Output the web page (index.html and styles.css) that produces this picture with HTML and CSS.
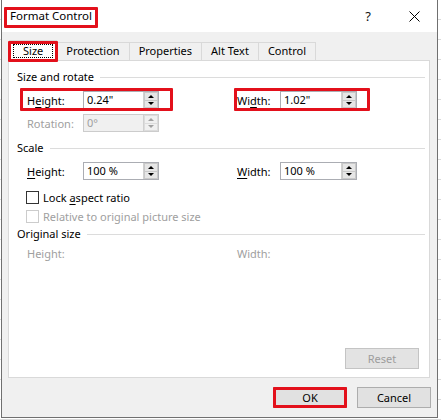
FILE: index.html
```html
<!DOCTYPE html>
<html>
<head>
<meta charset="utf-8">
<title>Format Control</title>
<link rel="stylesheet" href="styles.css">
</head>
<body>
<div class="dialog">
  <div class="titlebar">
    <div class="title"><span>Format Control</span><i class="hl"></i></div>
    <div class="cap-btn help">?</div>
    <div class="cap-btn close">
      <svg width="11" height="11" viewBox="0 0 11 11"><path d="M0.5 0.5 L10.5 10.5 M10.5 0.5 L0.5 10.5" stroke="#000" stroke-width="1" fill="none"/></svg>
    </div>
  </div>
  <div class="body">
    <div class="tabs">
      <div class="tab active"><span class="focus">Size</span><i class="hl"></i></div>
      <div class="tab">Protection</div>
      <div class="tab">Properties</div>
      <div class="tab">Alt Text</div>
      <div class="tab">Control</div>
    </div>
    <div class="panel">
      <div class="group-title"><span>Size and rotate</span></div>
      <div class="row first">
        <div class="field">
          <span class="lbl">H<u>e</u>ight:</span>
          <div class="input"><span>0.24"</span><div class="spin"><b class="up"></b><b class="down"></b></div></div>
          <i class="hl hl-h"></i>
        </div>
        <div class="field second">
          <span class="lbl">Wi<u>d</u>th:</span>
          <div class="input"><span>1.02"</span><div class="spin"><b class="up"></b><b class="down"></b></div></div>
          <i class="hl hl-w"></i>
        </div>
      </div>
      <div class="row tight">
        <div class="field disabled">
          <span class="lbl">Rotation:</span>
          <div class="input"><span>0°</span><div class="spin"><b class="up"></b><b class="down"></b></div></div>
        </div>
      </div>

      <div class="group-title spaced"><span>Scale</span></div>
      <div class="row first">
        <div class="field">
          <span class="lbl"><u>H</u>eight:</span>
          <div class="input"><span>100 %</span><div class="spin"><b class="up"></b><b class="down"></b></div></div>
        </div>
        <div class="field second">
          <span class="lbl"><u>W</u>idth:</span>
          <div class="input"><span>100 %</span><div class="spin"><b class="up"></b><b class="down"></b></div></div>
        </div>
      </div>
      <div class="check first-check"><span class="box"></span><span>Lock <u>a</u>spect ratio</span></div>
      <div class="check disabled"><span class="box"></span><span>Relative to original picture size</span></div>

      <div class="group-title"><span>Original size</span></div>
      <div class="row orig disabled">
        <span class="lbl wide">Height:</span>
        <span class="lbl second">Width:</span>
      </div>

      <div class="reset-row"><div class="btn dis">Reset</div></div>
    </div>
    <div class="footer">
      <div class="btn ok">OK<i class="hl"></i></div>
      <div class="btn">Cancel</div>
    </div>
  </div>
</div>
</body>
</html>
```

FILE: styles.css
```css
html, body {
  margin: 0;
  padding: 0;
}
body {
  background: #fff repeating-linear-gradient(to bottom, transparent 0 19px, #dadada 19px 20px);
  font-family: "Noto Sans", "Open Sans", sans-serif;
  font-size: 11px;
  color: #000;
  width: 441px;
  height: 420px;
  overflow: hidden;
}
u { text-decoration: underline; text-underline-offset: 2px; }

.dialog {
  margin-left: 1px;
  width: 437px;
  height: 418px;
  box-sizing: border-box;
  border: 1px solid #707070;
  border-top: none;
  background: #f0f0f0;
  display: flex;
  flex-direction: column;
}

.hl {
  position: absolute;
  border: 3px solid #e3101b;
  border-radius: 1px;
  pointer-events: none;
  z-index: 5;
}

/* title bar */
.titlebar {
  height: 32px;
  background: #fff;
  display: flex;
  align-items: center;
  flex: none;
}
.title {
  position: relative;
  margin-left: 8px;
  line-height: 16px;
  font-size: 11.5px;
}
.title .hl { left: -6px; right: -6px; top: -1px; bottom: -4px; }
.cap-btn {
  width: 46px;
  height: 32px;
  display: flex;
  align-items: center;
  justify-content: center;
}
.help { margin-left: auto; font-size: 13px; color: #111; padding-left: 3px; }
.close svg { display: block; }

/* body */
.body {
  flex: 1;
  display: flex;
  flex-direction: column;
  padding: 8px 7px 0 6px;
}
.tabs {
  display: flex;
  align-items: flex-end;
  height: 20px;
  padding-left: 1px;
  position: relative;
  z-index: 2;
}
.tab {
  height: 18px;
  box-sizing: border-box;
  border: 1px solid #d9d9d9;
  border-bottom: none;
  background: #f0f0f0;
  padding: 0 9px;
  line-height: 16px;
  margin-right: -1px;
}
.tab.active {
  position: relative;
  height: 21px;
  margin-bottom: -1px;
  background: #fff;
  padding: 0 13px;
  line-height: 19px;
}
.tab .focus { display: inline-block; }
.tab.active::before {
  content: "";
  position: absolute;
  left: 3px;
  right: 3px;
  top: 3px;
  bottom: 3px;
  border: 1px dotted #000;
}
.tab.active .hl { left: -2px; right: -2px; top: 0; bottom: -1px; }

.panel {
  height: 318px;
  box-sizing: border-box;
  border: 1px solid #d9d9d9;
  background: #fff;
  display: flex;
  flex-direction: column;
  padding: 8px 4px 8px 8px;
  flex: none;
}
.group-title {
  display: flex;
  align-items: center;
  gap: 6px;
  height: 16px;
  line-height: 16px;
}
.group-title::after {
  content: "";
  flex: 1;
  height: 1px;
  background: #dcdcdc;
}
.group-title.spaced { margin-top: 8px; }

.row {
  display: flex;
  align-items: center;
  height: 18px;
  padding-left: 10px;
  margin-top: 6px;
}
.row.tight { margin-top: 5px; }
.row.orig { margin-top: 2px; }
.field {
  display: flex;
  align-items: center;
  position: relative;
  height: 18px;
}
.field.second { margin-left: 78px; }
.lbl { width: 56px; white-space: nowrap; }
.second .lbl { width: 43px; }
.lbl.wide { width: 132px; }
.row .lbl.second { margin-left: 78px; width: auto; }
.input {
  position: relative;
  width: 76px;
  height: 18px;
  box-sizing: border-box;
  border: 1px solid #abadb3;
  padding-left: 3px;
  line-height: 16px;
  background: #fff;
}
.second .input { width: 77px; }
.spin {
  position: absolute;
  right: 0;
  top: 0;
  bottom: 0;
  width: 14px;
  display: flex;
  flex-direction: column;
  border-left: 1px solid #d0d0d0;
}
.spin b {
  flex: 1;
  background: #e6e6e6;
  border: 1px solid #c9c9c9;
  display: flex;
  align-items: center;
  justify-content: center;
}
.spin b + b { border-top: none; }
.spin b::after {
  content: "";
  width: 0;
  height: 0;
  border-left: 3px solid transparent;
  border-right: 3px solid transparent;
}
.spin .up::after { border-bottom: 3px solid #000; }
.spin .down::after { border-top: 3px solid #000; }

.hl-h { left: -7px; right: -14px; top: -3px; bottom: -2px; }
.hl-w { left: -3px; right: -13px; top: -3px; bottom: -2px; }

.disabled { color: #a0a0a0; }
.disabled .input { background: #f0f0f0; border-color: #cccccc; }
.disabled .spin b { background: #f0f0f0; border-color: #dcdcdc; }
.disabled .spin .up::after { border-bottom-color: #a0a0a0; }
.disabled .spin .down::after { border-top-color: #a0a0a0; }

.check {
  display: flex;
  align-items: center;
  gap: 4px;
  height: 19px;
  padding-left: 9px;
}
.check.first-check { margin-top: 8px; }
.check .box {
  width: 13px;
  height: 13px;
  box-sizing: border-box;
  border: 1px solid #333;
  background: #fff;
}
.check.disabled .box { border-color: #cccccc; }

.reset-row {
  margin-top: auto;
  display: flex;
  justify-content: flex-end;
  padding-right: 6px;
}
.btn {
  position: relative;
  width: 74px;
  height: 21px;
  box-sizing: border-box;
  border: 1px solid #adadad;
  background: #e1e1e1;
  text-align: center;
  line-height: 19px;
}
.btn.dis {
  background: #e3e3e3;
  border-color: #c4c4c4;
  color: #9d9d9d;
}
.footer {
  display: flex;
  justify-content: flex-end;
  gap: 10px;
  margin-top: 9px;
  margin-right: -1px;
}
.btn.ok .hl { left: -1px; right: -1px; top: -1px; bottom: -1px; }
```
